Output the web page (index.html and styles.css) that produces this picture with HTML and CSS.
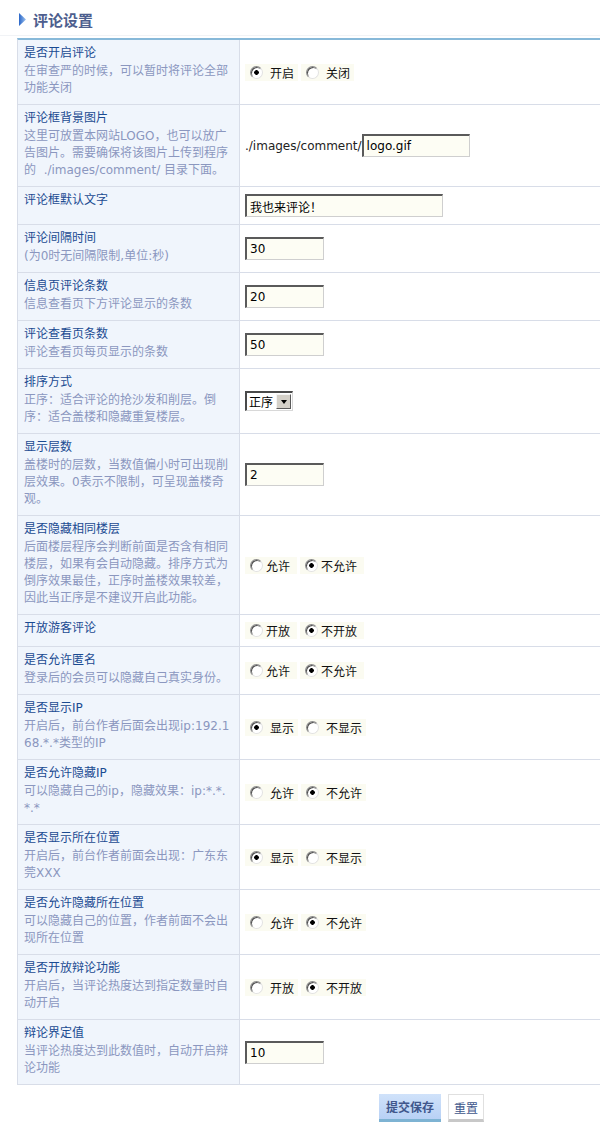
FILE: index.html
```html
<!DOCTYPE html>
<html lang="zh-CN">
<head>
<meta charset="utf-8">
<title>评论设置</title>
<link rel="stylesheet" href="styles.css">
</head>
<body>
<div class="page">
  <div class="head">
    <svg class="tri" width="7" height="13" viewBox="0 0 7 13"><defs><linearGradient id="g" x1="0" y1="0" x2="1" y2="0"><stop offset="0" stop-color="#2a66c8"/><stop offset="1" stop-color="#9cc2ee"/></linearGradient></defs><polygon points="0,0 7,6.5 0,13" fill="url(#g)"/></svg>
    <h1 class="title">评论设置</h1>
  </div>
  <table class="form">
    <tr>
      <td class="lbl"><div class="t">是否开启评论</div><div class="d">在审查严的时候，可以暂时将评论全部功能关闭</div></td>
      <td class="val"><div class="opts"><label class="opt"><input type="radio" name="r1" checked><span>开启</span></label><label class="opt"><input type="radio" name="r1"><span>关闭</span></label></div></td>
    </tr>
    <tr>
      <td class="lbl"><div class="t">评论框背景图片</div><div class="d">这里可放置本网站LOGO，也可以放广告图片。需要确保将该图片上传到程序的&nbsp; ./images/comment/ 目录下面。</div></td>
      <td class="val"><div class="path"><span class="ptxt">./images/comment/</span><input class="txt w108" type="text" value="logo.gif"></div></td>
    </tr>
    <tr>
      <td class="lbl"><div class="t">评论框默认文字</div></td>
      <td class="val"><input class="txt w198" type="text" value="我也来评论！"></td>
    </tr>
    <tr>
      <td class="lbl"><div class="t">评论间隔时间</div><div class="d">(为0时无间隔限制,单位:秒)</div></td>
      <td class="val"><input class="txt w79" type="text" value="30"></td>
    </tr>
    <tr>
      <td class="lbl"><div class="t">信息页评论条数</div><div class="d">信息查看页下方评论显示的条数</div></td>
      <td class="val"><input class="txt w79" type="text" value="20"></td>
    </tr>
    <tr>
      <td class="lbl"><div class="t">评论查看页条数</div><div class="d">评论查看页每页显示的条数</div></td>
      <td class="val"><input class="txt w79" type="text" value="50"></td>
    </tr>
    <tr>
      <td class="lbl"><div class="t">排序方式</div><div class="d">正序：适合评论的抢沙发和削层。倒序：适合盖楼和隐藏重复楼层。</div></td>
      <td class="val"><div class="sel"><select><option>正序</option><option>倒序</option></select><span class="arr"></span></div></td>
    </tr>
    <tr>
      <td class="lbl"><div class="t">显示层数</div><div class="d">盖楼时的层数，当数值偏小时可出现削层效果。0表示不限制，可呈现盖楼奇观。</div></td>
      <td class="val"><input class="txt w79" type="text" value="2"></td>
    </tr>
    <tr>
      <td class="lbl"><div class="t">是否隐藏相同楼层</div><div class="d">后面楼层程序会判断前面是否含有相同楼层，如果有会自动隐藏。排序方式为倒序效果最佳，正序时盖楼效果较差，因此当正序是不建议开启此功能。</div></td>
      <td class="val"><div class="opts"><label class="opt tight"><input type="radio" name="r9"><span>允许</span></label><label class="opt tight"><input type="radio" name="r9" checked><span>不允许</span></label></div></td>
    </tr>
    <tr>
      <td class="lbl"><div class="t">开放游客评论</div></td>
      <td class="val"><div class="opts"><label class="opt tight"><input type="radio" name="r10"><span>开放</span></label><label class="opt tight"><input type="radio" name="r10" checked><span>不开放</span></label></div></td>
    </tr>
    <tr>
      <td class="lbl"><div class="t">是否允许匿名</div><div class="d">登录后的会员可以隐藏自己真实身份。</div></td>
      <td class="val"><div class="opts"><label class="opt tight"><input type="radio" name="r11"><span>允许</span></label><label class="opt tight"><input type="radio" name="r11" checked><span>不允许</span></label></div></td>
    </tr>
    <tr>
      <td class="lbl"><div class="t">是否显示IP</div><div class="d">开启后，前台作者后面会出现ip:192.1<wbr>68.*.*类型的IP</div></td>
      <td class="val"><div class="opts"><label class="opt"><input type="radio" name="r12" checked><span>显示</span></label><label class="opt"><input type="radio" name="r12"><span>不显示</span></label></div></td>
    </tr>
    <tr>
      <td class="lbl"><div class="t">是否允许隐藏IP</div><div class="d">可以隐藏自己的ip，隐藏效果：ip:*.*.<wbr>*.*</div></td>
      <td class="val"><div class="opts"><label class="opt"><input type="radio" name="r13"><span>允许</span></label><label class="opt"><input type="radio" name="r13" checked><span>不允许</span></label></div></td>
    </tr>
    <tr>
      <td class="lbl"><div class="t">是否显示所在位置</div><div class="d">开启后，前台作者前面会出现：广东东莞XXX</div></td>
      <td class="val"><div class="opts"><label class="opt"><input type="radio" name="r14" checked><span>显示</span></label><label class="opt"><input type="radio" name="r14"><span>不显示</span></label></div></td>
    </tr>
    <tr>
      <td class="lbl"><div class="t">是否允许隐藏所在位置</div><div class="d">可以隐藏自己的位置，作者前面不会出现所在位置</div></td>
      <td class="val"><div class="opts"><label class="opt"><input type="radio" name="r15"><span>允许</span></label><label class="opt"><input type="radio" name="r15" checked><span>不允许</span></label></div></td>
    </tr>
    <tr>
      <td class="lbl"><div class="t">是否开放辩论功能</div><div class="d">开启后，当评论热度达到指定数量时自动开启</div></td>
      <td class="val"><div class="opts"><label class="opt"><input type="radio" name="r16"><span>开放</span></label><label class="opt"><input type="radio" name="r16" checked><span>不开放</span></label></div></td>
    </tr>
    <tr>
      <td class="lbl"><div class="t">辩论界定值</div><div class="d">当评论热度达到此数值时，自动开启辩论功能</div></td>
      <td class="val"><input class="txt w79" type="text" value="10"></td>
    </tr>
  </table>
  <div class="btns">
    <button class="btn submit" type="submit">提交保存</button>
    <button class="btn reset" type="reset">重置</button>
  </div>
</div>
</body>
</html>
```
FILE: styles.css
```css
html, body {
  margin: 0;
  padding: 0;
  background: #fff;
}
body {
  font-family: "DejaVu Sans", "Noto Sans CJK SC", sans-serif;
  font-size: 12px;
  color: #000;
}
.page {
  width: 600px;
}
.head {
  height: 31px;
  padding-top: 4px;
  padding-left: 19px;
  display: flex;
  align-items: center;
  gap: 7px;
  border-bottom: 1px solid #f1f3f6;
  margin-bottom: 2px;
}
.tri {
  display: block;
}
.title {
  margin: 0;
  font-family: "Noto Sans CJK SC", sans-serif;
  font-size: 15px;
  font-weight: bold;
  color: #4d5e8e;
  line-height: 20px;
}
.form {
  border-collapse: separate;
  border-spacing: 0;
  width: 583px;
  margin-left: 17px;
  border-left: 1px solid #d8dde8;
  border-top: 2px solid #88b9d9;
}
.lbl {
  width: 207px;
  padding: 3px 8px 7px 6px;
  background: #f0f5fc;
  border-right: 1px solid #d8dde8;
  border-bottom: 1px solid #d8dde8;
  vertical-align: top;
}
.val {
  padding: 7px 5px;
  border-bottom: 1px solid #d8dde8;
  vertical-align: middle;
}
.t {
  line-height: 20px;
  color: #1b4b92;
}
.d {
  line-height: 17px;
  color: #8b97bf;
}
.opts {
  display: flex;
  gap: 3px;
}
.opt {
  display: inline-flex;
  align-items: center;
  gap: 7px;
  height: 17px;
  padding: 0 4px 0 5px;
  background: #fbfbf1;
  font-family: "Noto Sans CJK SC", sans-serif;
  color: #111;
}
.opt.tight {
  gap: 3px;
  padding-right: 7px;
}
.opt input[type="radio"] {
  appearance: none;
  -webkit-appearance: none;
  margin: 0;
  width: 13px;
  height: 13px;
  border-radius: 50%;
  border: 1px solid;
  border-color: #8a8a8a #e2e2e2 #e2e2e2 #8a8a8a;
  box-shadow: inset 1px 1px 0 #505050;
  background: #fff;
  box-sizing: border-box;
}
.opt input[type="radio"]:checked {
  background: radial-gradient(circle at 50% 50%, #000 0, #000 2px, #fff 2.6px);
}
.path {
  display: flex;
  align-items: center;
}
.ptxt {
  color: #222;
}
.txt {
  box-sizing: border-box;
  height: 23px;
  margin: 0;
  padding: 0 3px;
  border-style: solid;
  border-width: 2px 1px 1px 2px;
  border-color: #5a5a5a #cfcfcf #cfcfcf #5a5a5a;
  background: #fdfdf4;
  font-family: "DejaVu Sans", "Noto Sans CJK SC", sans-serif;
  font-size: 12px;
  color: #000;
  vertical-align: middle;
}
.w79 { width: 79px; }
.w108 { width: 108px; }
.w198 { width: 198px; }
.sel {
  display: inline-flex;
  align-items: center;
  box-sizing: border-box;
  width: 48px;
  height: 20px;
  border-style: solid;
  border-width: 2px 1px 1px 2px;
  border-color: #4a4a4a #d8d8d8 #d8d8d8 #4a4a4a;
  background: #fff;
  vertical-align: middle;
}
.sel select {
  appearance: none;
  -webkit-appearance: none;
  border: 0;
  margin: 0;
  padding: 0 0 0 2px;
  width: 29px;
  height: 17px;
  background: transparent;
  font-family: "Noto Sans CJK SC", sans-serif;
  font-size: 12px;
  color: #000;
  outline: none;
}
.arr {
  box-sizing: border-box;
  width: 15px;
  height: 15px;
  background: #d4d0c8;
  border: 1px solid;
  border-color: #f4f4f4 #5a5a5a #5a5a5a #f4f4f4;
  display: flex;
  align-items: center;
  justify-content: center;
}
.arr::before {
  content: "";
  width: 0;
  height: 0;
  border-left: 3.5px solid transparent;
  border-right: 3.5px solid transparent;
  border-top: 4px solid #000;
}
.btns {
  display: flex;
  gap: 7px;
  padding-left: 379px;
  margin-top: 9px;
}
.btn {
  box-sizing: border-box;
  height: 28px;
  margin: 0;
  padding: 0;
  font-family: "Noto Sans CJK SC", sans-serif;
  font-size: 12px;
  color: #40578c;
  cursor: pointer;
}
.submit {
  width: 62px;
  border: 0;
  border-bottom: 3px solid #7eb3d3;
  background: linear-gradient(#d0e2fa, #b8d1f5);
  font-weight: bold;
}
.reset {
  width: 36px;
  border: 1px solid #e0e0e0;
  border-bottom: 3px solid #c8c8c8;
  background: #fff;
}
```
